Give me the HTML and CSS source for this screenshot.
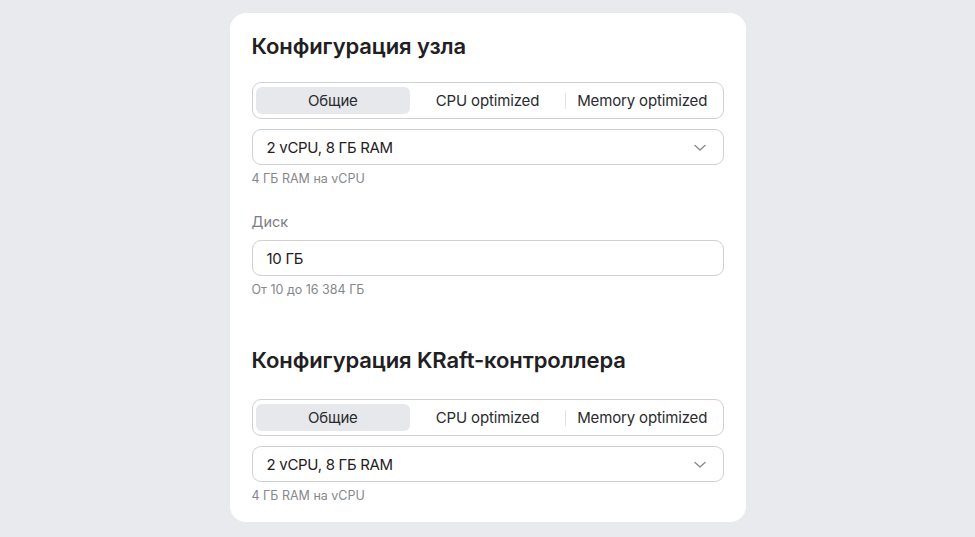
FILE: index.html
```html
<!DOCTYPE html>
<html lang="ru">
<head>
<meta charset="utf-8">
<title>Конфигурация</title>
<link rel="stylesheet" href="styles.css">
</head>
<body>
<div class="card">
  <h2 class="title">Конфигурация узла</h2>
  <div class="seg">
    <div class="seg-item active">Общие</div>
    <div class="seg-item">CPU optimized</div>
    <div class="seg-item divided">Memory optimized</div>
  </div>
  <div class="field select">
    <span>2 vCPU, 8 ГБ RAM</span>
    <svg class="chev" width="12" height="8" viewBox="0 0 12 8"><path d="M1 1.5 L6 6 L11 1.5" fill="none" stroke="#8a8b8f" stroke-width="1.4" stroke-linecap="round" stroke-linejoin="round"/></svg>
  </div>
  <div class="hint">4 ГБ RAM на vCPU</div>
  <div class="label">Диск</div>
  <div class="field input"><span>10 ГБ</span></div>
  <div class="hint">От 10 до 16 384 ГБ</div>

  <h2 class="title second">Конфигурация KRaft-контроллера</h2>
  <div class="seg">
    <div class="seg-item active">Общие</div>
    <div class="seg-item">CPU optimized</div>
    <div class="seg-item divided">Memory optimized</div>
  </div>
  <div class="field select">
    <span>2 vCPU, 8 ГБ RAM</span>
    <svg class="chev" width="12" height="8" viewBox="0 0 12 8"><path d="M1 1.5 L6 6 L11 1.5" fill="none" stroke="#8a8b8f" stroke-width="1.4" stroke-linecap="round" stroke-linejoin="round"/></svg>
  </div>
  <div class="hint">4 ГБ RAM на vCPU</div>
</div>
</body>
</html>
```

FILE: styles.css
```css
* { box-sizing: border-box; }
html, body { margin: 0; padding: 0; }
body {
  background: #e9eaed;
  font-family: Inter, "Noto Sans", sans-serif;
  color: #222326;
}
.card {
  width: 516px;
  margin: 13px auto 0;
  background: #fff;
  border-radius: 16px;
  padding: 19px 22px 17px;
}
.title {
  margin: 0;
  font-size: 22px;
  line-height: 28px;
  font-weight: 600;
  color: #1f2023;
  letter-spacing: -0.1px;
}
.title.second { margin-top: 47px; }
.seg {
  margin-top: 22px;
  height: 37px;
  border: 1px solid #cfd0d4;
  border-radius: 9px;
  padding: 4px 3px;
  display: flex;
}
.title.second + .seg { margin-top: 25px; }
.seg-item {
  flex: 1;
  height: 27px;
  display: flex;
  align-items: center;
  justify-content: center;
  font-size: 15px;
  letter-spacing: -0.15px;
  color: #2a2b2e;
  border-radius: 6px;
  position: relative;
}
.seg-item.active { background: #e7e8eb; }
.seg-item.divided::before {
  content: "";
  position: absolute;
  left: 0;
  top: 6px;
  bottom: 5px;
  width: 1px;
  background: #e2e3e6;
}
.field {
  height: 36px;
  border: 1px solid #cfd0d4;
  border-radius: 9px;
  display: flex;
  align-items: center;
  justify-content: space-between;
  padding: 0 17px 0 14px;
  font-size: 15px;
  letter-spacing: -0.3px;
  color: #1f2023;
}
.select { margin-top: 10px; }
.chev { display: block; margin-top: 1px; }
.hint {
  margin-top: 5px;
  font-size: 12.5px;
  line-height: 18px;
  color: #86878b;
}
.label {
  margin-top: 24px;
  font-size: 14.5px;
  line-height: 20px;
  color: #7c7d81;
}
.input { margin-top: 8px; }
```
